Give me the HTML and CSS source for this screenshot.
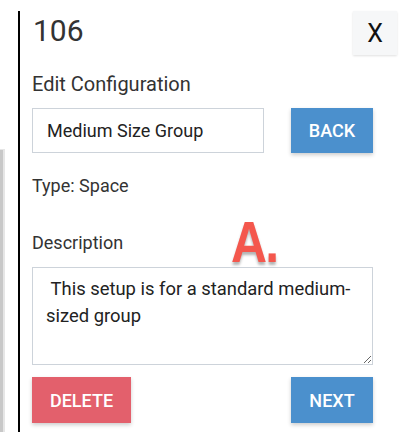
FILE: index.html
```html
<!DOCTYPE html>
<html>
<head>
<meta charset="utf-8">
<link rel="stylesheet" href="styles.css">
</head>
<body>
<div class="side-strip"></div>
<div class="panel">
  <div class="header">
    <div class="title">106</div>
    <button class="close-btn">X</button>
  </div>
  <div class="section-title">Edit Configuration</div>
  <div class="name-row">
    <input class="name-input" type="text" value="Medium Size Group">
    <button class="btn btn-blue">BACK</button>
  </div>
  <div class="type-label">Type: Space</div>
  <div class="desc-label">Description</div>
  <textarea class="desc-input"> This setup is for a standard medium-sized group</textarea>
  <div class="actions">
    <button class="btn btn-red">DELETE</button>
    <button class="btn btn-blue">NEXT</button>
  </div>
  <div class="marker">A.</div>
</div>
</body>
</html>
```
FILE: styles.css
```css
html, body {
  margin: 0;
  padding: 0;
  background: #fff;
  height: 432px;
  overflow: hidden;
}
body {
  display: flex;
  align-items: flex-start;
  font-family: Roboto, "Liberation Sans", sans-serif;
  color: #333;
}
.side-strip {
  width: 3px;
  height: 300px;
  margin-top: 149px;
  background: #c8c8c8;
  border-right: 2px solid #e6e6e6;
  border-top: 1px solid #e6e6e6;
}
.panel {
  position: relative;
  margin-left: 13px;
  margin-top: 11px;
  border-left: 2px solid #000;
  padding-left: 12px;
  width: 365px;
  height: 430px;
}
.header {
  display: flex;
  justify-content: space-between;
  align-items: flex-start;
  height: 44px;
}
.title {
  font-size: 30px;
  line-height: 40px;
  color: #333;
  padding-left: 1px;
}
.close-btn {
  width: 44px;
  height: 44px;
  border: none;
  background: #f6f7f8;
  box-shadow: 0 1px 2px rgba(0,0,0,0.12);
  font-family: Roboto, "Liberation Sans", sans-serif;
  font-size: 25px;
  color: #111;
  padding: 0;
}
.section-title {
  margin-top: 17px;
  font-size: 20px;
  line-height: 24px;
  color: #333;
}
.name-row {
  display: flex;
  justify-content: space-between;
  width: 341px;
  height: 45px;
  margin-top: 12px;
}
.name-input {
  box-sizing: border-box;
  width: 232px;
  height: 45px;
  border: 1px solid #cdd3da;
  padding: 0 14px;
  font-family: Roboto, "Liberation Sans", sans-serif;
  font-size: 18px;
  color: #222;
  outline: none;
}
.btn {
  box-sizing: border-box;
  height: 46px;
  border: none;
  color: #fff;
  font-family: Roboto, "Liberation Sans", sans-serif;
  font-size: 18px;
  font-weight: 500;
  padding: 0;
  box-shadow: 0 2px 4px rgba(0,0,0,0.2);
}
.name-row .btn {
  height: 45px;
}
.btn-blue {
  width: 82px;
  background: #4b90cd;
}
.btn-red {
  width: 99px;
  background: #e3606c;
}
.type-label {
  margin-top: 21px;
  font-size: 18px;
  line-height: 24px;
  color: #333;
}
.desc-label {
  margin-top: 33px;
  font-size: 18px;
  line-height: 24px;
  color: #333;
}
.desc-input {
  display: block;
  box-sizing: border-box;
  width: 341px;
  height: 98px;
  margin-top: 12px;
  border: 1px solid #cdd3da;
  padding: 7px 13px;
  font-family: Roboto, "Liberation Sans", sans-serif;
  font-size: 18.4px;
  line-height: 27px;
  color: #222;
  resize: vertical;
  outline: none;
}
.actions {
  display: flex;
  justify-content: space-between;
  width: 341px;
  margin-top: 12px;
}
.marker {
  position: absolute;
  left: 211px;
  top: 202px;
  font-family: "Liberation Sans", Arial, sans-serif;
  font-weight: 700;
  font-size: 58px;
  line-height: 1;
  color: #f4574d;
  -webkit-text-stroke: 8px #fff;
  paint-order: stroke fill;
  text-shadow: 0 3px 3px rgba(0,0,0,0.3);
  letter-spacing: -2px;
  transform: scaleX(0.86);
  transform-origin: left top;
}
```
